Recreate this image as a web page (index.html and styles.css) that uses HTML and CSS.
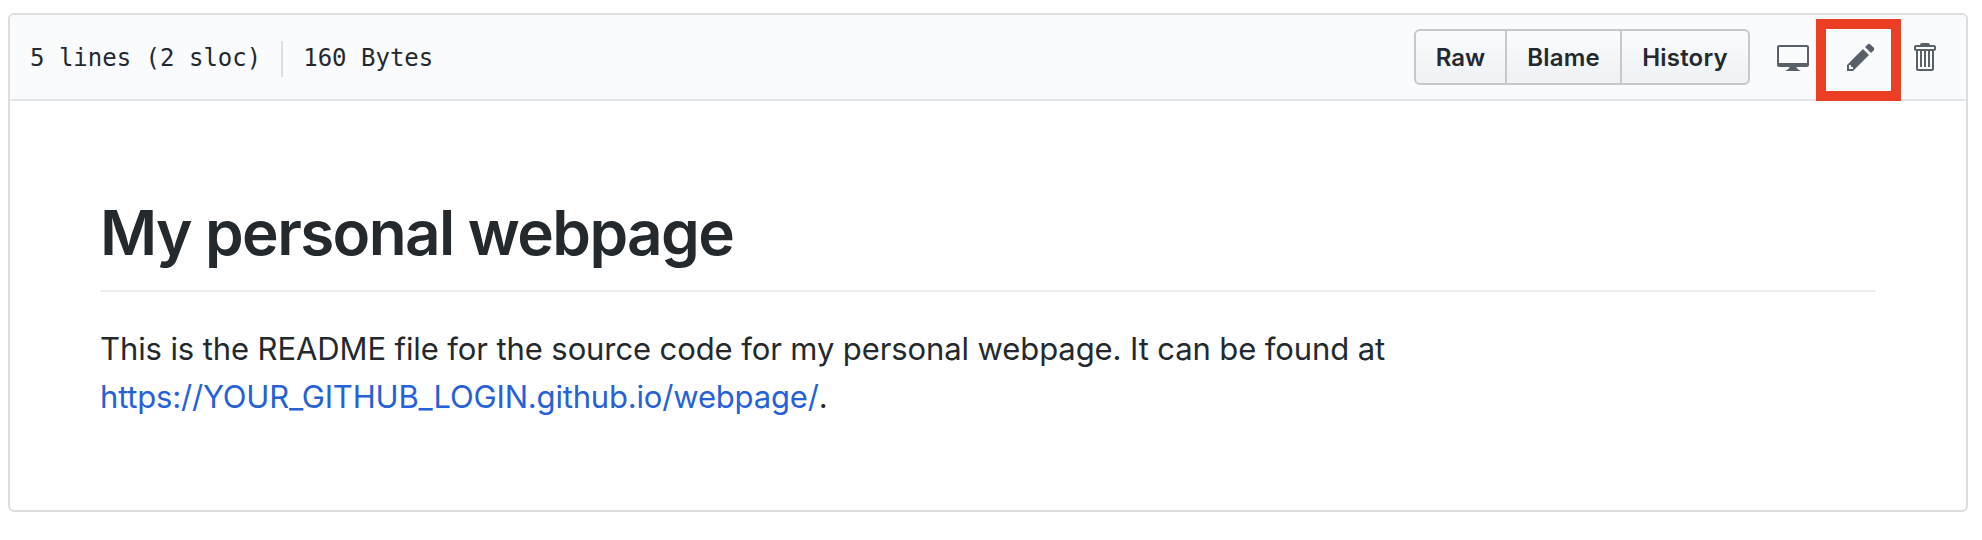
FILE: index.html
```html
<!DOCTYPE html>
<html lang="en">
<head>
<meta charset="utf-8">
<title>README.md</title>
<link rel="stylesheet" href="styles.css">
</head>
<body>
<div class="file">
  <div class="file-header">
    <div class="file-info"><span>5 lines (2 sloc)</span><span class="divider"></span><span>160 Bytes</span></div>
    <div class="file-actions">
      <div class="btn-group">
        <a class="btn btn-raw">Raw</a>
        <a class="btn btn-blame">Blame</a>
        <a class="btn btn-history">History</a>
      </div>
      <svg class="icon" width="32" height="32" viewBox="0 0 16 16"><path fill-rule="evenodd" d="M15 2H1c-.55 0-1 .45-1 1v9c0 .55.45 1 1 1h5.34c-.25.61-.86 1.39-2.34 2h8c-1.48-.61-2.09-1.39-2.34-2H15c.55 0 1-.45 1-1V3c0-.55-.45-1-1-1zm0 9H1V3h14v8z"/></svg>
      <span class="edit">
        <svg class="icon" width="28" height="32" viewBox="0 0 14 16"><path fill-rule="evenodd" d="M0 12v3h3l8-8-3-3-8 8zm3 2H1v-2h1v1h1v1zm10.3-9.3L12 6 9 3l1.3-1.3a.996.996 0 0 1 1.41 0l1.59 1.59c.39.39.39 1.02 0 1.41z"/></svg>
        <span class="highlight"></span>
      </span>
      <svg class="icon" width="24" height="32" viewBox="0 0 12 16"><path fill-rule="evenodd" d="M11 2H9c0-.55-.45-1-1-1H5c-.55 0-1 .45-1 1H2c-.55 0-1 .45-1 1v1c0 .55.45 1 1 1v9c0 .55.45 1 1 1h7c.55 0 1-.45 1-1V5c.55 0 1-.45 1-1V3c0-.55-.45-1-1-1zm-1 12H3V5h1v8h1V5h1v8h1V5h1v8h1V5h1v9zm1-10H2V3h9v1z"/></svg>
    </div>
  </div>
  <article class="readme">
    <h1 class="title">My personal webpage</h1>
    <p class="text">This is the README file for the source code for my personal webpage. It can be found at<br><a class="link">https://YOUR_GITHUB_LOGIN.github.io/webpage/</a>.</p>
  </article>
</div>
</body>
</html>
```
FILE: styles.css
```css
* { box-sizing: border-box; }
body {
  margin: 0;
  padding: 13px 14px 0 8px;
  background: #fff;
  color: #24292e;
  font-family: Inter, "Liberation Sans", sans-serif;
}
.file {
  height: 499px;
  border: 2px solid #ddd;
  border-radius: 6px;
}
.file-header {
  display: flex;
  justify-content: space-between;
  align-items: center;
  height: 86px;
  padding: 0 30px 0 20px;
  background: #fafbfc;
  border-bottom: 2px solid #e1e4e8;
  border-radius: 4px 4px 0 0;
}
.file-info {
  display: flex;
  align-items: center;
  padding-top: 2px;
  font: 24px/36px "DejaVu Sans Mono", "Liberation Mono", monospace;
  white-space: pre;
}
.divider {
  width: 2px;
  height: 36px;
  margin: 2px 20px 0 20px;
  background: #ddd;
}
.file-actions { display: flex; align-items: center; }
.btn-group {
  display: flex;
  height: 56px;
  margin-right: 27px;
  border: 2px solid #c6c9cc;
  border-radius: 6px;
  background: linear-gradient(#fafbfc, #eff3f6 90%);
}
.btn {
  display: flex;
  align-items: center;
  justify-content: center;
  font-size: 24px;
  font-weight: 600;
  letter-spacing: 0.2px;
}
.btn + .btn { border-left: 2px solid #c6c9cc; }
.btn-raw { width: 89px; letter-spacing: 0; }
.btn-blame { width: 115px; }
.btn-history { width: 128px; }
.icon { display: block; fill: #586069; }
.edit { position: relative; margin: 0 37px 0 38px; }
.highlight {
  position: absolute;
  left: -31px;
  top: -22px;
  width: 85px;
  height: 82px;
  border: 10px solid #ec3e24;
}
.readme { padding: 92px 90px 0; }
.title {
  margin: 0 0 33px;
  height: 99px;
  border-bottom: 2px solid #eaecef;
  font-size: 62px;
  line-height: 80px;
  font-weight: 600;
  letter-spacing: -1.6px;
  white-space: nowrap;
}
.text { margin: 0; font-size: 31px; line-height: 48px; letter-spacing: -0.1px; white-space: nowrap; }
.link { color: #2561d8; letter-spacing: -0.18px; }
```
